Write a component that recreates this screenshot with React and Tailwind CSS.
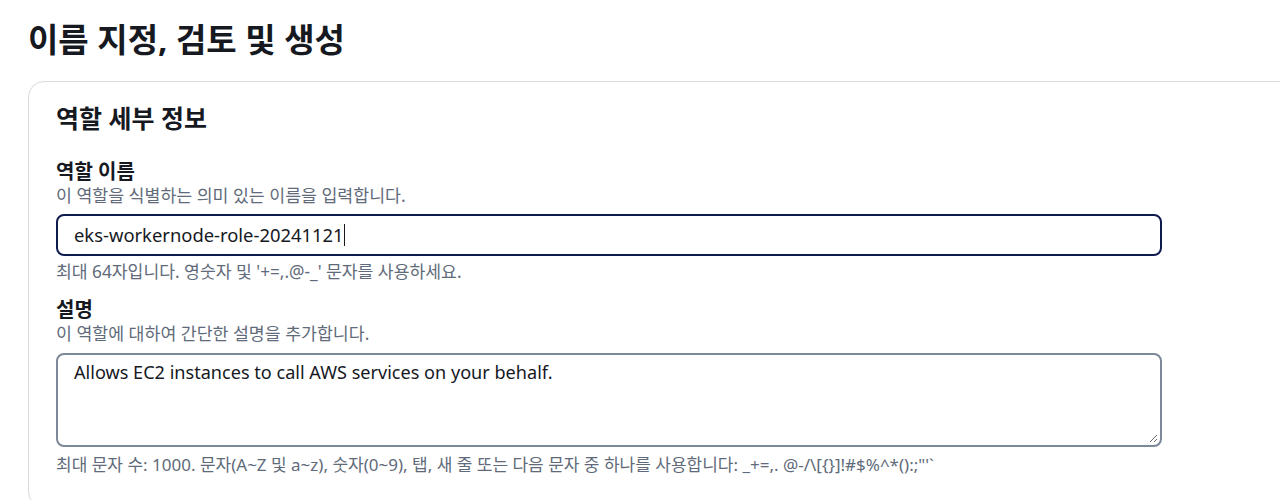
export default function App() {
  return (
    <div
      className="min-h-[500px] bg-white overflow-hidden"
      style={{ fontFamily: '"Noto Sans", "Noto Sans CJK KR", sans-serif' }}
    >
      <h1 className="pl-[28px] pt-[18px] text-[33px] leading-[44px] font-bold text-[#16191f]">
        이름 지정, 검토 및 생성
      </h1>
      <div className="mt-[19px] ml-[28px] -mr-[20px] border border-[#d5dbdb] rounded-[16px] pl-[27px] pr-[137px] pt-[20px] pb-[30px]">
        <h2 className="text-[25px] leading-[32px] font-bold text-[#16191f]">역할 세부 정보</h2>

        <div className="mt-[26px]">
          <div className="text-[20px] leading-[24px] font-bold text-[#16191f]">역할 이름</div>
          <div className="text-[17.3px] leading-[24px] text-[#5f6b7a]">이 역할을 식별하는 의미 있는 이름을 입력합니다.</div>
          <div className="mt-[6px] h-[42px] border-2 border-[#0f1b4f] rounded-[8px] flex items-center pl-[16px]">
            <span className="text-[18.4px] text-[#16191f]">eks-workernode-role-20241121</span>
            <span className="w-px h-[22px] bg-[#16191f]"></span>
          </div>
          <div className="mt-[4px] text-[17.2px] leading-[24px] text-[#5f6b7a]">최대 64자입니다. 영숫자 및 '+=,.@-_' 문자를 사용하세요.</div>
        </div>

        <div className="mt-[14px]">
          <div className="text-[20px] leading-[24px] font-bold text-[#16191f]">설명</div>
          <div className="text-[17.3px] leading-[24px] text-[#5f6b7a]">이 역할에 대하여 간단한 설명을 추가합니다.</div>
          <div className="relative mt-[7px] h-[94px] border-2 border-[#7d8998] rounded-[8px] pl-[16px] pt-[4px]">
            <span className="text-[18.1px] leading-[26px] text-[#16191f]">Allows EC2 instances to call AWS services on your behalf.</span>
            <svg className="absolute right-[2px] bottom-[2px]" width="9" height="9" viewBox="0 0 9 9">
              <path d="M8 1 L1 8 M8 5 L5 8" stroke="#6b6b6b" strokeWidth="1" />
            </svg>
          </div>
          <div className="mt-[6px] text-[17px] leading-[24px] text-[#5f6b7a] whitespace-nowrap">
            최대 문자 수: 1000. 문자(A~Z 및 a~z), 숫자(0~9), 탭, 새 줄 또는 다음 문자 중 하나를 사용합니다: _+=,. @-/\[{'{'}{'}'}]!#$%^*():;"'`
          </div>
        </div>
      </div>
    </div>
  );
}
